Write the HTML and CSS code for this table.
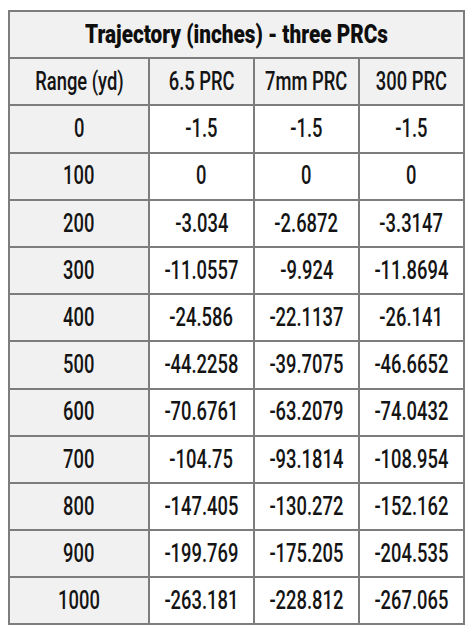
FILE: index.html
```html
<!DOCTYPE html>
<html>
<head>
<meta charset="utf-8">
<link rel="stylesheet" href="styles.css">
</head>
<body>
<table class="traj">
  <colgroup><col class="c1"><col class="c2"><col class="c2"><col class="c2"></colgroup>
  <tr class="title"><th colspan="4"><span class="tx">Trajectory (inches) - three PRCs</span></th></tr>
  <tr class="head"><td><span class="tx">Range (yd)</span></td><td><span class="tx">6.5 PRC</span></td><td><span class="tx">7mm PRC</span></td><td><span class="tx">300 PRC</span></td></tr>
  <tr><td class="rng"><span class="tx">0</span></td><td><span class="tx">-1.5</span></td><td><span class="tx">-1.5</span></td><td><span class="tx">-1.5</span></td></tr>
  <tr><td class="rng"><span class="tx">100</span></td><td><span class="tx">0</span></td><td><span class="tx">0</span></td><td><span class="tx">0</span></td></tr>
  <tr><td class="rng"><span class="tx">200</span></td><td><span class="tx">-3.034</span></td><td><span class="tx">-2.6872</span></td><td><span class="tx">-3.3147</span></td></tr>
  <tr><td class="rng"><span class="tx">300</span></td><td><span class="tx">-11.0557</span></td><td><span class="tx">-9.924</span></td><td><span class="tx">-11.8694</span></td></tr>
  <tr><td class="rng"><span class="tx">400</span></td><td><span class="tx">-24.586</span></td><td><span class="tx">-22.1137</span></td><td><span class="tx">-26.141</span></td></tr>
  <tr><td class="rng"><span class="tx">500</span></td><td><span class="tx">-44.2258</span></td><td><span class="tx">-39.7075</span></td><td><span class="tx">-46.6652</span></td></tr>
  <tr><td class="rng"><span class="tx">600</span></td><td><span class="tx">-70.6761</span></td><td><span class="tx">-63.2079</span></td><td><span class="tx">-74.0432</span></td></tr>
  <tr><td class="rng"><span class="tx">700</span></td><td><span class="tx">-104.75</span></td><td><span class="tx">-93.1814</span></td><td><span class="tx">-108.954</span></td></tr>
  <tr><td class="rng"><span class="tx">800</span></td><td><span class="tx">-147.405</span></td><td><span class="tx">-130.272</span></td><td><span class="tx">-152.162</span></td></tr>
  <tr><td class="rng"><span class="tx">900</span></td><td><span class="tx">-199.769</span></td><td><span class="tx">-175.205</span></td><td><span class="tx">-204.535</span></td></tr>
  <tr><td class="rng"><span class="tx">1000</span></td><td><span class="tx">-263.181</span></td><td><span class="tx">-228.812</span></td><td><span class="tx">-267.065</span></td></tr>
</table>
</body>
</html>
```

FILE: styles.css
```css
html, body {
  margin: 0;
  background: #ffffff;
}
body {
  padding: 10px 0 0 8px;
  font-family: Roboto, "Liberation Sans", sans-serif;
  color: #141414;
}
.traj {
  border-collapse: collapse;
  table-layout: fixed;
  width: 455px;
}
.c1 { width: 140px; }
.c2 { width: 105px; }
.traj td, .traj th {
  border: 2px solid #7d7d7d;
  text-align: center;
  padding: 0;
  font-size: 25.5px;
  font-weight: 500;
  height: 45.2px;
  line-height: 1;
  background: #ffffff;
  white-space: nowrap;
}
.tx {
  display: inline-block;
  margin: 0 -40px;
  transform: scaleX(0.72);
}
.traj tr.title th {
  background: #f1f1f1;
  font-weight: 900;
  font-size: 25px;
  color: #0e0e0e;
}
.traj tr.title .tx {
  transform: scaleX(0.83);
}
.traj tr.head td {
  background: #f1f1f1;
}
.traj td.rng {
  background: #f1f1f1;
}
```
